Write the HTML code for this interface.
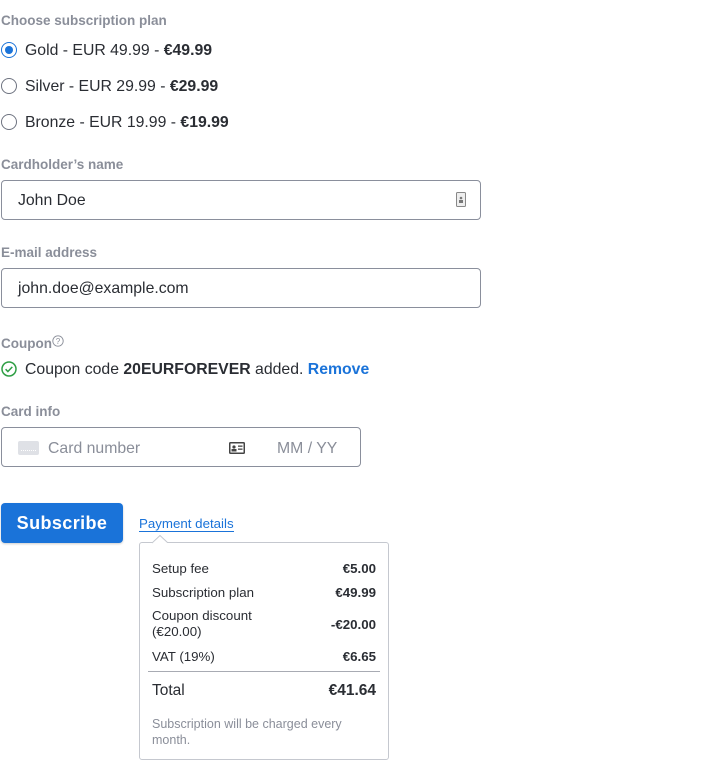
<!DOCTYPE html>
<html><head><meta charset="utf-8"><style>
*{box-sizing:border-box;margin:0;padding:0}
body{width:725px;height:774px;background:#fff;font-family:"Liberation Sans",sans-serif;color:#2a2d33;position:relative;overflow:hidden}
.a{position:absolute;white-space:nowrap}
.lbl{font-size:13.5px;font-weight:bold;color:#8a8e99}
.r{font-size:15.8px;left:25px}
.rad{position:absolute;left:1px;width:16px;height:16px;border:1px solid #6e7380;border-radius:50%}
.inp{position:absolute;left:1px;border:1px solid #8a8f9c;border-radius:4px;background:#fff}
.it{font-size:15.8px}
.pr{font-size:13.3px;color:#2a2d33}
.pv{font-size:13.3px;font-weight:bold;right:0;text-align:right}
</style></head><body>
<div class="a lbl" style="left:1px;top:13px">Choose subscription plan</div>
<div class="rad" style="top:42px;border-color:#1a73d9"><div style="position:absolute;left:3px;top:3px;width:8px;height:8px;border-radius:50%;background:#1a73d9"></div></div>
<div class="a r" style="top:42px">Gold - EUR 49.99 - <b>€49.99</b></div>
<div class="rad" style="top:78px"></div>
<div class="a r" style="top:78px">Silver - EUR 29.99 - <b>€29.99</b></div>
<div class="rad" style="top:114px"></div>
<div class="a r" style="top:114px">Bronze - EUR 19.99 - <b>€19.99</b></div>

<div class="a lbl" style="left:1px;top:157px">Cardholder’s name</div>
<div class="inp" style="top:180px;width:480px;height:40px"></div>
<div class="a it" style="left:18px;top:192px">John Doe</div>
<svg class="a" style="left:456px;top:192px" width="10" height="15" viewBox="0 0 10 15"><rect x="0.5" y="0.5" width="9" height="14" rx="1" fill="#eee" stroke="#888"/><circle cx="5" cy="6" r="1.3" fill="#777"/><rect x="3" y="8" width="4" height="3" fill="#777"/></svg>

<div class="a lbl" style="left:1px;top:245px">E-mail address</div>
<div class="inp" style="top:268px;width:480px;height:40px"></div>
<div class="a it" style="left:18px;top:280px">john.doe@example.com</div>

<div class="a lbl" style="left:1px;top:336px">Coupon</div>
<svg class="a" style="left:52px;top:335px" width="12" height="12" viewBox="0 0 12 12"><circle cx="6" cy="6" r="5.2" fill="none" stroke="#8a8e99" stroke-width="0.9"/><text x="6" y="9" font-size="8" text-anchor="middle" fill="#8a8e99" font-family="Liberation Sans">?</text></svg>
<svg class="a" style="left:1px;top:361px" width="16" height="16" viewBox="0 0 16 16"><circle cx="8" cy="8" r="7" fill="none" stroke="#2e9e44" stroke-width="1.5"/><path d="M4.6 8.2l2.3 2.3 4.4-4.6" fill="none" stroke="#2e9e44" stroke-width="1.5"/></svg>
<div class="a it" style="left:25px;top:361px">Coupon code <b>20EURFOREVER</b> added. <b style="color:#1a73d9">Remove</b></div>

<div class="a lbl" style="left:1px;top:404px">Card info</div>
<div class="inp" style="top:427px;width:360px;height:40px"></div>
<div class="a" style="left:18px;top:441px;width:21px;height:14px;background:#dfe1e6;border-radius:2px"><div style="position:absolute;left:3px;top:9px;width:15px;height:1px;border-top:1px dotted #fff"></div></div>
<div class="a it" style="left:48px;top:440px;color:#8a8e99">Card number</div>
<svg class="a" style="left:229px;top:442px" width="16" height="12" viewBox="0 0 16 12"><rect x="0" y="0" width="16" height="12" rx="1.5" fill="#444"/><rect x="1.5" y="1.5" width="13" height="9" fill="#fff"/><circle cx="5" cy="5" r="1.6" fill="#444"/><rect x="2.5" y="7" width="5" height="2.5" fill="#444"/><rect x="9" y="3.5" width="4.5" height="1.3" fill="#444"/><rect x="9" y="6.5" width="4.5" height="1.3" fill="#444"/></svg>
<div class="a it" style="left:277px;top:440px;color:#8a8e99">MM / YY</div>

<div class="a" style="left:1px;top:503px;width:122px;height:40px;background:#1a73d9;border-radius:4px;box-shadow:0 1px 2px rgba(0,0,0,.2);color:#fff;font-size:18px;font-weight:bold;text-align:center;line-height:41px;letter-spacing:.4px">Subscribe</div>
<div class="a" style="left:139px;top:516px;font-size:13.3px;color:#1a73d9;border-bottom:1px solid #1a73d9;line-height:15px">Payment details</div>

<div class="a" style="left:139px;top:542px;width:250px;height:218px;border:1px solid #c5c8cf;border-radius:3px;background:#fff"></div>
<svg class="a" style="left:152px;top:535px" width="18" height="9" viewBox="0 0 18 9"><path d="M0 8L8 0.5L16 8" fill="#fff" stroke="#c5c8cf"/><rect x="1" y="8" width="15" height="1" fill="#fff"/></svg>
<div class="a" style="left:152px;top:561px;width:224px;height:200px">
<div class="a pr" style="left:0;top:0">Setup fee</div><div class="a pv" style="top:0">€5.00</div>
<div class="a pr" style="left:0;top:24px">Subscription plan</div><div class="a pv" style="top:24px">€49.99</div>
<div class="a pr" style="left:0;top:47px;line-height:16px">Coupon discount<br>(€20.00)</div><div class="a pv" style="top:56px">-€20.00</div>
<div class="a pr" style="left:0;top:88px">VAT (19%)</div><div class="a pv" style="top:88px">€6.65</div>
<div class="a" style="left:-4px;top:110px;width:232px;height:1px;background:#a8abb3"></div>
<div class="a" style="left:0;top:121px;font-size:15.5px">Total</div><div class="a" style="right:0;top:121px;font-size:15.5px;font-weight:bold">€41.64</div>
<div class="a" style="left:0;top:155px;font-size:12.5px;color:#8a8e99;line-height:16px">Subscription will be charged every<br>month.</div>
</div>
</body></html>
